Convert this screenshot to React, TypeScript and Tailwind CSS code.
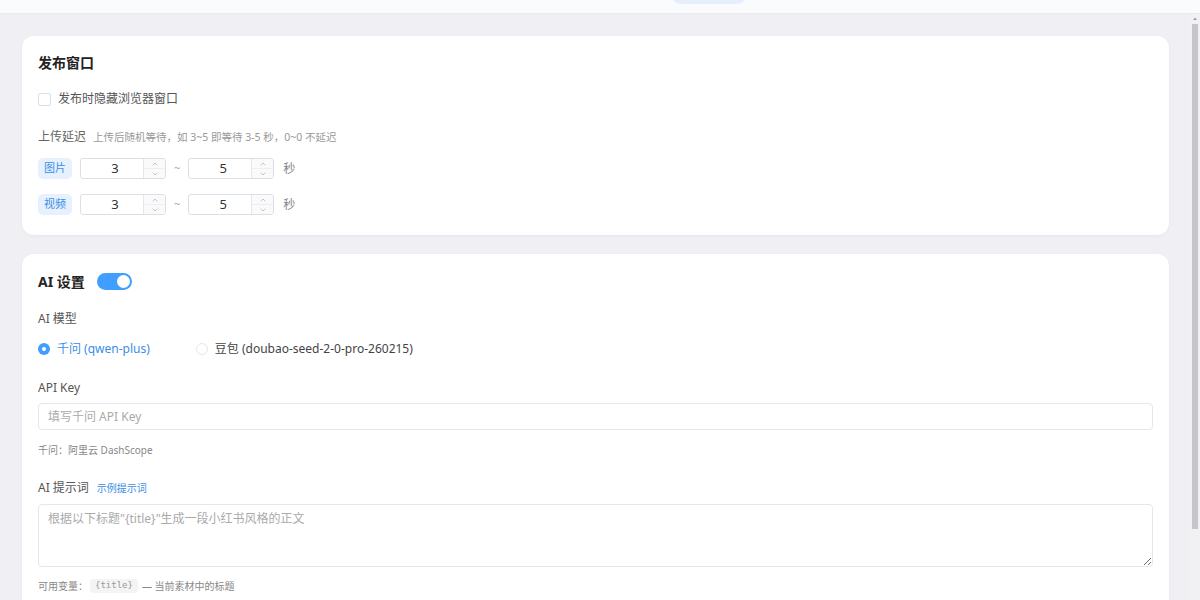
import { ChevronDown, ChevronUp } from "lucide-react";

const FONT = { fontFamily: '"Noto Sans", "Noto Sans CJK SC", sans-serif' };

function NumberBox({ value }: { value: string }) {
  return (
    <div className="flex h-[21px] w-[86px] overflow-hidden rounded-[3px] border border-[#dcdfe6] bg-white">
      <div className="flex flex-1 items-center justify-center pl-[6px] text-[13px] text-[#333]">{value}</div>
      <div className="flex w-[22px] flex-col border-l border-[#e4e7ed] bg-[#fafafa]">
        <div className="flex flex-1 items-center justify-center border-b border-[#ebeef5]">
          <ChevronUp className="h-[8px] w-[8px] text-[#a8abb2]" strokeWidth={2} />
        </div>
        <div className="flex flex-1 items-center justify-center">
          <ChevronDown className="h-[8px] w-[8px] text-[#a8abb2]" strokeWidth={2} />
        </div>
      </div>
    </div>
  );
}

function DelayRow({ tag }: { tag: string }) {
  return (
    <div className="flex items-center">
      <span className="flex h-[21px] w-[34px] items-center justify-center rounded-[5px] bg-[#e6f1fd] text-[11px] text-[#3b8ee6]">
        {tag}
      </span>
      <div className="ml-[8px]">
        <NumberBox value="3" />
      </div>
      <span className="mx-[8px] text-[11px] text-[#aaa]">~</span>
      <NumberBox value="5" />
      <span className="ml-[9px] text-[12px] text-[#888]">秒</span>
    </div>
  );
}

export default function App() {
  return (
    <div className="flex h-[600px] w-[1200px] flex-col overflow-hidden bg-[#f0f0f4]" style={FONT}>
      {/* Top bar */}
      <div className="relative h-[14px] shrink-0 overflow-hidden border-b border-[#ececf0] bg-[#fafbfd]">
        <div className="absolute left-[670px] top-[-20px] h-[24px] w-[78px] rounded-full bg-[#e5effc]" />
      </div>

      <div className="flex min-h-0 flex-1">
        {/* Scroll area */}
        <div className="min-w-0 flex-1 overflow-hidden">
          <div className="flex flex-col gap-[19px] pb-[22px] pl-[22px] pr-[21px] pt-[22px]">
            {/* Card 1 */}
            <section className="rounded-[12px] bg-white px-4 pb-[20px] pt-4 shadow-[0_1px_3px_rgba(0,0,0,0.04)]">
              <h2 className="text-[14px] leading-[22px] font-bold text-[#222]">发布窗口</h2>

              <label className="mt-[15px] flex h-[20px] items-center gap-[7px]">
                <span className="h-[13px] w-[13px] rounded-[2px] border border-[#dcdfe6] bg-white" />
                <span className="text-[12px] text-[#555]">发布时隐藏浏览器窗口</span>
              </label>

              <div className="mt-[19px] flex h-[20px] items-baseline gap-[7px]">
                <span className="text-[12px] text-[#666]">上传延迟</span>
                <span className="text-[10.5px] text-[#999]">上传后随机等待，如 3~5 即等待 3-5 秒，0~0 不延迟</span>
              </div>

              <div className="mt-[10px] flex flex-col gap-[15px]">
                <DelayRow tag="图片" />
                <DelayRow tag="视频" />
              </div>
            </section>

            {/* Card 2 */}
            <section className="rounded-[12px] bg-white px-4 pb-[62px] pt-[15px] shadow-[0_1px_3px_rgba(0,0,0,0.04)]">
              <div className="flex h-[24px] items-center gap-[12px]">
                <h2 className="text-[14px] font-bold text-[#222]">AI 设置</h2>
                <span className="relative flex h-[17px] w-[35px] items-center rounded-full bg-[#409eff]">
                  <span className="absolute right-[2px] h-[13px] w-[13px] rounded-full bg-white" />
                </span>
              </div>

              <div className="mt-[16px] text-[12px] leading-[20px] text-[#555]">AI 模型</div>

              <div className="mt-[10px] flex h-[20px] items-center text-[12px]">
                <label className="flex items-center gap-[7px]">
                  <span className="flex h-[12px] w-[12px] items-center justify-center rounded-full bg-[#409eff]">
                    <span className="h-[4px] w-[4px] rounded-full bg-white" />
                  </span>
                  <span className="text-[#3b8ee6]">千问 (qwen-plus)</span>
                </label>
                <label className="ml-[46px] flex items-center gap-[7px]">
                  <span className="h-[12px] w-[12px] rounded-full border border-[#e4e7ed] bg-white" />
                  <span className="text-[#444]">豆包 (doubao-seed-2-0-pro-260215)</span>
                </label>
              </div>

              <div className="mt-[19px] text-[12px] leading-[20px] text-[#555]">API Key</div>
              <input
                className="mt-[5px] block h-[27px] w-full rounded-[4px] border border-[#e4e7ed] px-[9px] text-[12px] text-[#333] outline-none placeholder:text-[#aaa]"
                placeholder="填写千问 API Key"
              />
              <div className="mt-[12px] text-[10px] leading-[16px] text-[#888]">千问：阿里云 DashScope</div>

              <div className="mt-[21px] flex h-[20px] items-baseline gap-[8px]">
                <span className="text-[12px] text-[#555]">AI 提示词</span>
                <span className="text-[10px] text-[#3b8ee6]">示例提示词</span>
              </div>
              <textarea
                className="mt-[5px] block h-[63px] w-full resize-y rounded-[4px] border border-[#e4e7ed] px-[9px] py-[5px] text-[12px] text-[#333] outline-none placeholder:text-[#aaa]"
                placeholder={'根据以下标题"{title}"生成一段小红书风格的正文'}
              />
              <div className="mt-[11px] flex h-[16px] items-center text-[10px] text-[#888]">
                <span>可用变量：</span>
                <code
                  className="ml-[2px] rounded-[3px] bg-[#f4f4f5] px-[5px] text-[9px] text-[#999]"
                  style={{ fontFamily: '"DejaVu Sans Mono", monospace' }}
                >
                  {"{title}"}
                </code>
                <span className="ml-[4px]">— 当前素材中的标题</span>
              </div>
            </section>
          </div>
        </div>

        {/* Scrollbar */}
        <div className="flex w-[10px] shrink-0 flex-col items-center bg-[#f1f1f3]">
          <svg width="6" height="8" viewBox="0 0 6 8" className="shrink-0">
            <path d="M1 6 L3 3.5 L5 6 Z" fill="#a0a0a4" />
          </svg>
          <div className="mt-[2px] h-[505px] w-[6px] bg-[#c5c6ca]" />
        </div>
      </div>
    </div>
  );
}
